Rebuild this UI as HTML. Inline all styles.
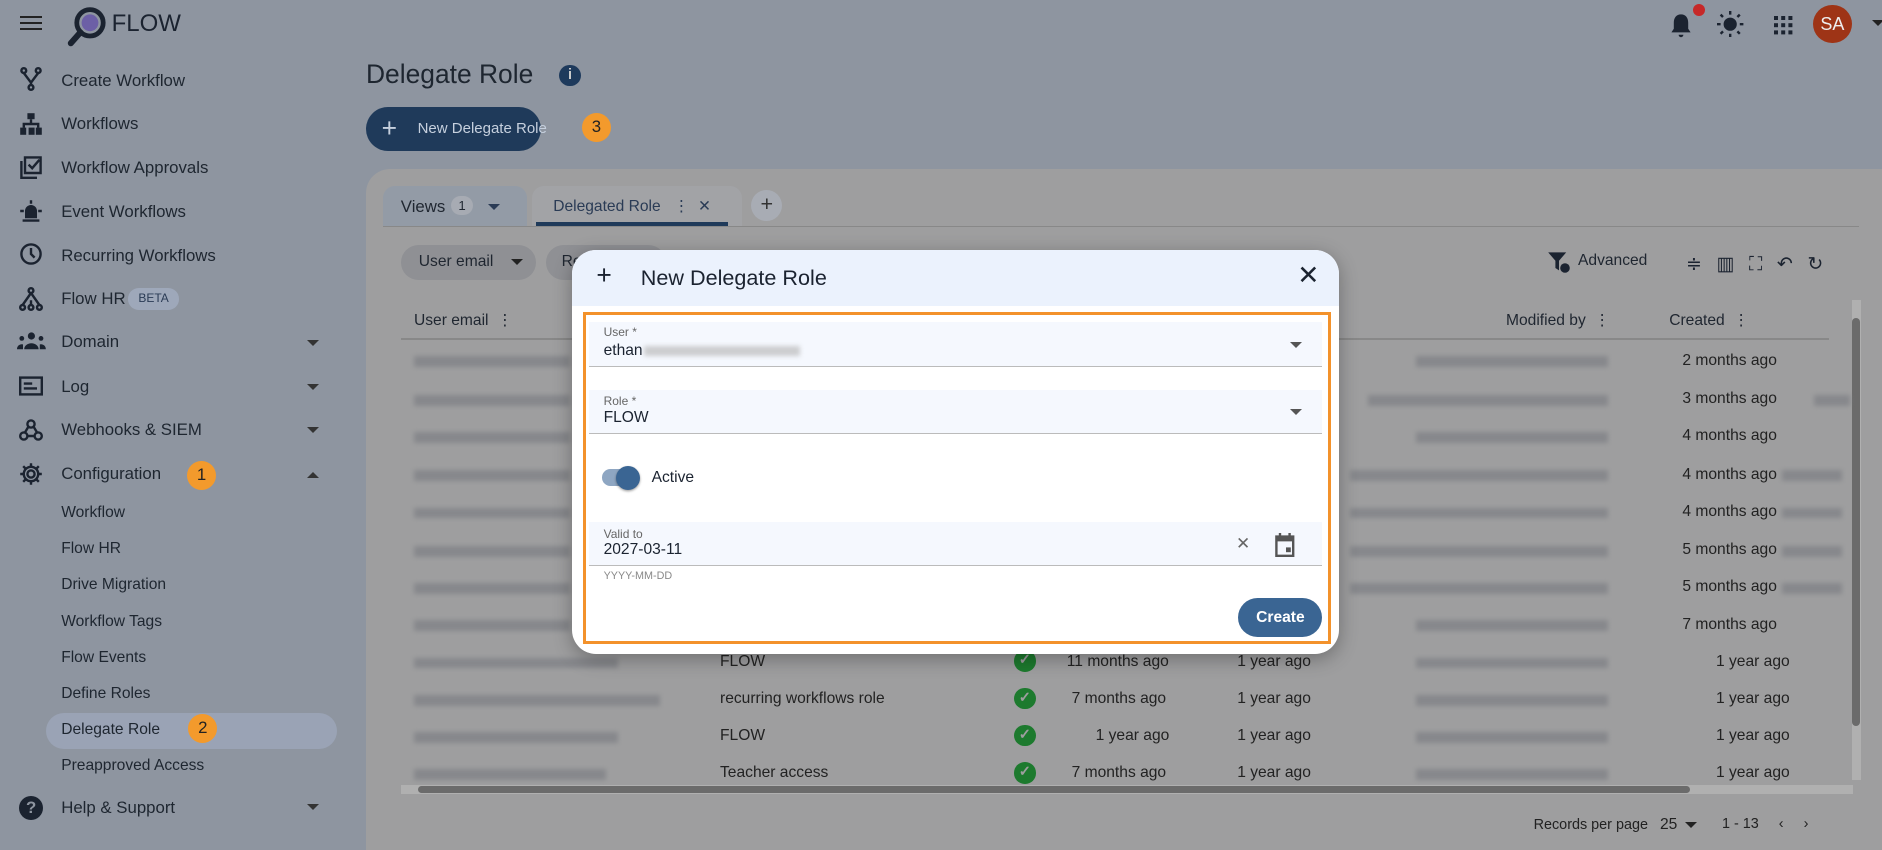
<!DOCTYPE html>
<html><head><meta charset="utf-8"><style>
*{box-sizing:border-box;margin:0;padding:0}
html,body{width:1882px;height:850px;overflow:hidden;background:#8e95a0;font-family:"Liberation Sans",sans-serif}
#w{zoom:1.2;width:1568px;height:708px;position:relative;color:#1f2630}
.a{position:absolute;white-space:nowrap}
.nav{font-size:14px;color:#1e2630}
.blur{position:absolute;height:9px;background:#7d7f84;filter:blur(2px);opacity:.7}
.cell{position:absolute;font-size:13px;color:#222;white-space:nowrap}
.badge{position:absolute;width:24px;height:24px;border-radius:50%;background:#f39a2c;color:#222;font-size:14px;text-align:center;line-height:24px}
.ck{position:absolute;width:18px;height:18px;border-radius:50%;background:#1d7a2e;color:#9e9e9f;font-size:12px;font-weight:bold;text-align:center;line-height:18px}
</style></head><body><div id="w">
<div class="a" style="left:17px;top:13px;width:18px;height:2px;background:#222;box-shadow:0 5px 0 #222,0 10px 0 #222"></div>
<svg class="a" style="left:55px;top:5px" width="34" height="34" viewBox="0 0 34 34"><circle cx="20" cy="14" r="11" fill="none" stroke="#1b2330" stroke-width="4"/><circle cx="20" cy="14" r="7" fill="#6c5fa6"/><line x1="12" y1="22" x2="4" y2="31" stroke="#1b2330" stroke-width="5" stroke-linecap="round"/></svg>
<div class="a" style="left:93px;top:8px;font-size:20px;color:#1b2330">FLOW</div>
<svg class="a" style="left:1391px;top:10px" width="20" height="22" viewBox="0 0 20 22"><path d="M10 2c-4 0-6 3-6 7v5l-2 3h16l-2-3V9c0-4-2-7-6-7zM8 19h4a2 2 0 0 1-4 0z" fill="#1b2330"/></svg>
<div class="a" style="left:1411px;top:3px;width:10px;height:10px;border-radius:50%;background:#c62828"></div>
<svg class="a" style="left:1431px;top:9px" width="22" height="22" viewBox="0 0 22 22" fill="#1b2330" stroke="#1b2330" stroke-width="2"><circle cx="11" cy="11" r="4.5"/><path d="M11 0v3M11 19v3M0 11h3M19 11h3M3 3l2 2M17 17l2 2M3 19l2-2M17 5l2-2"/></svg>
<div class="a" style="left:1478px;top:13px;width:4px;height:4px;background:#1b2330;box-shadow:6px 0 #1b2330,12px 0 #1b2330,0 6px #1b2330,6px 6px #1b2330,12px 6px #1b2330,0 12px #1b2330,6px 12px #1b2330,12px 12px #1b2330"></div>
<div class="a" style="left:1511px;top:4px;width:32px;height:32px;border-radius:50%;background:#9e3416;color:#eee;font-size:15px;text-align:center;line-height:32px">SA</div>
<div class="a" style="left:1560px;top:17px;border:5px solid transparent;border-top-color:#222"></div>
<div class="nav">
<svg class="a" style="left:16px;top:56px" width="20" height="20" viewBox="0 0 20 20" fill="none" stroke="#1b2330" stroke-width="2"><circle cx="4" cy="3" r="2"/><circle cx="16" cy="3" r="2"/><circle cx="10" cy="17" r="2"/><path d="M4 5l6 8 6-8M10 13v2"/></svg>
<div class="a" style="left:51px;top:59px">Create Workflow</div>
<svg class="a" style="left:16px;top:93px" width="20" height="20" viewBox="0 0 20 20" fill="#1b2330"><rect x="7" y="1" width="6" height="5"/><rect x="1" y="13" width="5" height="6"/><rect x="8" y="13" width="5" height="6"/><rect x="14" y="13" width="5" height="6"/><path d="M9 6h2v3h6v4h-2v-2H5v2H3V9h6z"/></svg>
<div class="a" style="left:51px;top:95px">Workflows</div>
<svg class="a" style="left:16px;top:129px" width="20" height="20" viewBox="0 0 20 20" fill="none" stroke="#1b2330" stroke-width="2"><path d="M2 5v14h13M5 2h13v13H5zM8 8l3 3 6-7"/></svg>
<div class="a" style="left:51px;top:132px">Workflow Approvals</div>
<svg class="a" style="left:16px;top:166px" width="20" height="20" viewBox="0 0 20 20" fill="#1b2330"><path d="M5 16V10a5 5 0 0 1 10 0v6zM3 17h14v2H3zM9 1h2v3H9zM1 9h3v2H1zM16 9h3v2h-3z"/></svg>
<div class="a" style="left:51px;top:168px">Event Workflows</div>
<svg class="a" style="left:16px;top:202px" width="20" height="20" viewBox="0 0 20 20" fill="none" stroke="#1b2330" stroke-width="2"><circle cx="10" cy="10" r="8"/><path d="M10 5v5l3 3"/></svg>
<div class="a" style="left:51px;top:205px">Recurring Workflows</div>
<svg class="a" style="left:16px;top:239px" width="20" height="20" viewBox="0 0 20 20" fill="none" stroke="#1b2330" stroke-width="2"><circle cx="10" cy="3" r="2"/><circle cx="3" cy="17" r="2"/><circle cx="10" cy="17" r="2"/><circle cx="17" cy="17" r="2"/><path d="M10 5L3 15M10 5l7 10M10 11v4"/></svg>
<div class="a" style="left:51px;top:241px">Flow HR</div>
<div class="a" style="left:107px;top:240px;width:42px;height:18px;border-radius:9px;background:#9ea8ba;font-size:10px;color:#2a3b55;text-align:center;line-height:18px">BETA</div>
<svg class="a" style="left:14px;top:275px" width="24" height="20" viewBox="0 0 24 20" fill="#1b2330"><circle cx="12" cy="5" r="3"/><circle cx="4" cy="7" r="2"/><circle cx="20" cy="7" r="2"/><path d="M6 16a6 5 0 0 1 12 0zM0 16a4 4 0 0 1 5-4v4zM24 16a4 4 0 0 0-5-4v4z"/></svg>
<div class="a" style="left:51px;top:277px">Domain</div>
<svg class="a" style="left:16px;top:312px" width="20" height="20" viewBox="0 0 20 20" fill="none" stroke="#1b2330" stroke-width="2"><rect x="1" y="3" width="18" height="14"/><path d="M4 8h7M4 12h11"/></svg>
<div class="a" style="left:51px;top:314px">Log</div>
<svg class="a" style="left:16px;top:348px" width="20" height="20" viewBox="0 0 20 20" fill="none" stroke="#1b2330" stroke-width="2"><circle cx="10" cy="5" r="3"/><circle cx="4" cy="15" r="3"/><circle cx="16" cy="15" r="3"/><path d="M8 7l-3 5M12 7l3 5M7 15h6"/></svg>
<div class="a" style="left:51px;top:350px">Webhooks &amp; SIEM</div>
<svg class="a" style="left:16px;top:385px" width="20" height="20" viewBox="0 0 20 20" fill="none" stroke="#1b2330" stroke-width="2"><circle cx="10" cy="10" r="3"/><path d="M10 1v3M10 16v3M1 10h3M16 10h3M3.5 3.5l2 2M14.5 14.5l2 2M3.5 16.5l2-2M14.5 5.5l2-2"/><circle cx="10" cy="10" r="6"/></svg>
<div class="a" style="left:51px;top:387px">Configuration</div>
<div class="badge" style="left:156px;top:384px">1</div>
<div class="a" style="left:256px;top:283px;border:5px solid transparent;border-top-color:#333"></div>
<div class="a" style="left:256px;top:320px;border:5px solid transparent;border-top-color:#333"></div>
<div class="a" style="left:256px;top:356px;border:5px solid transparent;border-top-color:#333"></div>
<div class="a" style="left:256px;top:388px;border:5px solid transparent;border-bottom-color:#333"></div>
<div class="a" style="left:51px;top:420px;font-size:13px">Workflow</div>
<div class="a" style="left:51px;top:450px;font-size:13px">Flow HR</div>
<div class="a" style="left:51px;top:480px;font-size:13px">Drive Migration</div>
<div class="a" style="left:51px;top:511px;font-size:13px">Workflow Tags</div>
<div class="a" style="left:51px;top:541px;font-size:13px">Flow Events</div>
<div class="a" style="left:51px;top:571px;font-size:13px">Define Roles</div>
<div class="a" style="left:38px;top:594px;width:243px;height:30px;border-radius:15px;background:#9aa3b5"></div>
<div class="a" style="left:51px;top:601px;font-size:13px">Delegate Role</div>
<div class="badge" style="left:157px;top:595px">2</div>
<div class="a" style="left:51px;top:631px;font-size:13px">Preapproved Access</div>
<div class="a" style="left:16px;top:663px;width:20px;height:20px;border-radius:50%;background:#1b2330;color:#8e95a0;font-size:14px;font-weight:bold;text-align:center;line-height:20px">?</div>
<div class="a" style="left:51px;top:665px">Help &amp; Support</div>
<div class="a" style="left:256px;top:670px;border:5px solid transparent;border-top-color:#333"></div>
</div>
<div class="a" style="left:305px;top:49px;font-size:22px;color:#1e2630">Delegate Role</div>
<div class="a" style="left:466px;top:54px;width:18px;height:18px;border-radius:50%;background:#1e3a5c;color:#ccc;font-size:12px;font-weight:bold;text-align:center;line-height:18px">i</div>
<div class="a" style="left:305px;top:89px;width:146px;height:37px;border-radius:19px;background:#1f3a5a;color:#c6d0de;font-size:12.5px;line-height:37px;padding-left:43px">New Delegate Role</div>
<div class="a" style="left:318px;top:94px;font-size:22px;color:#c6d0de">+</div>
<div class="badge" style="left:485px;top:94px">3</div>
<div class="a" style="left:305px;top:141px;width:1263px;height:580px;border-radius:20px 0 0 0;background:#9e9e9f"></div>
<div class="a" style="left:319px;top:155px;width:120px;height:33px;border-radius:10px 10px 0 0;background:#939ba6"></div>
<div class="a" style="left:334px;top:164px;font-size:14px">Views</div>
<div class="a" style="left:376px;top:163px;width:18px;height:16px;border-radius:8px;background:#a7abb3;font-size:11px;text-align:center;line-height:16px">1</div>
<div class="a" style="left:407px;top:170px;border:5px solid transparent;border-top-color:#2a3b55"></div>
<div class="a" style="left:443px;top:155px;width:175px;height:33px;border-radius:10px 10px 0 0;background:#a2a3a6"></div>
<div class="a" style="left:461px;top:164px;font-size:13px;color:#2a3b55">Delegated Role &nbsp;&nbsp;⋮ &nbsp;✕</div>
<div class="a" style="left:447px;top:185px;width:160px;height:3px;background:#1f3a5a"></div>
<div class="a" style="left:626px;top:158px;width:26px;height:26px;border-radius:50%;background:#a8acb4;text-align:center;line-height:24px;font-size:18px;color:#333">+</div>
<div class="a" style="left:319px;top:188px;width:1230px;height:1px;background:#888"></div>
<div class="a" style="left:334px;top:204px;width:113px;height:29px;border-radius:15px;background:#8f9094;font-size:13px;line-height:29px;padding-left:15px">User email</div>
<div class="a" style="left:426px;top:216px;border:5px solid transparent;border-top-color:#222"></div>
<div class="a" style="left:455px;top:204px;width:100px;height:29px;border-radius:15px;background:#8f9094;font-size:13px;line-height:29px;padding-left:13px">Re</div>
<svg class="a" style="left:1289px;top:208px" width="20" height="20" viewBox="0 0 20 20" fill="#1b2330"><path d="M1 2h15l-6 7v8l-3-2V9z"/><circle cx="15" cy="15" r="4"/></svg>
<div class="a" style="left:1315px;top:210px;font-size:13px">Advanced</div>
<div class="a" style="left:1405px;top:210px;font-size:16px;letter-spacing:12px;color:#1b2330">≑▥⛶↶↻</div>
<div class="a" style="left:345px;top:259px;font-size:13px">User email &nbsp;⋮</div>
<div class="a" style="left:1255px;top:259px;font-size:13px">Modified by &nbsp;⋮</div>
<div class="a" style="left:1391px;top:259px;font-size:13px">Created &nbsp;⋮</div>
<div class="a" style="left:334px;top:282px;width:1190px;height:1px;background:#888"></div>
<div class="a" style="left:1543px;top:250px;width:8px;height:400px;background:#b0b0b0"></div>
<div class="a" style="left:1543px;top:265px;width:7px;height:340px;border-radius:4px;background:#6b6b6b"></div>
<div class="a" style="left:334px;top:654px;width:1210px;height:8px;background:#b0b0b0"></div>
<div class="a" style="left:348px;top:655px;width:1060px;height:6px;border-radius:3px;background:#6b6b6b"></div>
<div class="cell" style="left:1402px;top:293px">2 months ago</div>
<div class="cell" style="left:1402px;top:325px">3 months ago</div>
<div class="cell" style="left:1402px;top:356px">4 months ago</div>
<div class="cell" style="left:1402px;top:388px">4 months ago</div>
<div class="cell" style="left:1402px;top:419px">4 months ago</div>
<div class="cell" style="left:1402px;top:451px">5 months ago</div>
<div class="cell" style="left:1402px;top:482px">5 months ago</div>
<div class="cell" style="left:1402px;top:513px">7 months ago</div>
<div class="cell" style="left:1430px;top:544px">1 year ago</div>
<div class="cell" style="left:1430px;top:575px">1 year ago</div>
<div class="cell" style="left:1430px;top:606px">1 year ago</div>
<div class="cell" style="left:1430px;top:637px">1 year ago</div>
<div class="blur" style="left:345px;top:297px;width:130px"></div>
<div class="blur" style="left:345px;top:329px;width:130px"></div>
<div class="blur" style="left:345px;top:360px;width:130px"></div>
<div class="blur" style="left:345px;top:392px;width:130px"></div>
<div class="blur" style="left:345px;top:423px;width:130px"></div>
<div class="blur" style="left:345px;top:455px;width:130px"></div>
<div class="blur" style="left:345px;top:486px;width:130px"></div>
<div class="blur" style="left:345px;top:517px;width:130px"></div>
<div class="blur" style="left:345px;top:548px;width:170px"></div>
<div class="blur" style="left:345px;top:579px;width:205px"></div>
<div class="blur" style="left:345px;top:610px;width:170px"></div>
<div class="blur" style="left:345px;top:641px;width:160px"></div>
<div class="blur" style="left:1180px;top:297px;width:160px"></div>
<div class="blur" style="left:1140px;top:329px;width:200px"></div>
<div class="blur" style="left:1180px;top:360px;width:160px"></div>
<div class="blur" style="left:1125px;top:392px;width:215px"></div>
<div class="blur" style="left:1125px;top:423px;width:215px"></div>
<div class="blur" style="left:1125px;top:455px;width:215px"></div>
<div class="blur" style="left:1125px;top:486px;width:215px"></div>
<div class="blur" style="left:1180px;top:517px;width:160px"></div>
<div class="blur" style="left:1180px;top:548px;width:160px"></div>
<div class="blur" style="left:1180px;top:579px;width:160px"></div>
<div class="blur" style="left:1180px;top:610px;width:160px"></div>
<div class="blur" style="left:1180px;top:641px;width:160px"></div>
<div class="blur" style="left:1485px;top:392px;width:50px"></div>
<div class="blur" style="left:1485px;top:423px;width:50px"></div>
<div class="blur" style="left:1485px;top:455px;width:50px"></div>
<div class="blur" style="left:1485px;top:486px;width:50px"></div>
<div class="blur" style="left:1512px;top:329px;width:30px"></div>
<div class="cell" style="left:600px;top:544px">FLOW</div>
<div class="cell" style="left:600px;top:575px">recurring workflows role</div>
<div class="cell" style="left:600px;top:606px">FLOW</div>
<div class="cell" style="left:600px;top:637px">Teacher access</div>
<div class="ck" style="left:845px;top:542px">✓</div><div class="ck" style="left:845px;top:573px">✓</div><div class="ck" style="left:845px;top:604px">✓</div><div class="ck" style="left:845px;top:635px">✓</div>
<div class="cell" style="left:889px;top:544px">11 months ago</div>
<div class="cell" style="left:893px;top:575px">7 months ago</div>
<div class="cell" style="left:913px;top:606px">1 year ago</div>
<div class="cell" style="left:893px;top:637px">7 months ago</div>
<div class="cell" style="left:1031px;top:544px">1 year ago</div>
<div class="cell" style="left:1031px;top:575px">1 year ago</div>
<div class="cell" style="left:1031px;top:606px">1 year ago</div>
<div class="cell" style="left:1031px;top:637px">1 year ago</div>
<div class="cell" style="left:1278px;top:680px;font-size:12px">Records per page &nbsp;&nbsp;<span style="font-size:13px">25</span></div>
<div class="a" style="left:1404px;top:685px;border:5px solid transparent;border-top-color:#222"></div>
<div class="cell" style="left:1435px;top:680px;font-size:12px">1 - 13 &nbsp;&nbsp;&nbsp;&nbsp;&lsaquo; &nbsp;&nbsp;&nbsp;&nbsp;&rsaquo;</div>
<div class="a" style="left:477px;top:208px;width:639px;height:337px;border-radius:20px;background:#fff;overflow:hidden;box-shadow:0 4px 16px rgba(0,0,0,.3)">
<div style="height:47px;background:#ebf2fd;position:relative">
<div class="a" style="left:20px;top:9px;font-size:22px;color:#1b2330">+</div>
<div class="a" style="left:57px;top:13px;font-size:18px;color:#1b2330">New Delegate Role</div>
<div class="a" style="left:604px;top:9px;font-size:22px;color:#1b2330">✕</div>
</div>
<div class="a" style="left:9px;top:52px;width:623px;height:277px;border:3px solid #f3922b"></div>
<div class="a" style="left:14px;top:60px;width:611px;height:38px;background:#f5f8fe;border-bottom:1px solid #bbb"></div>
<div class="a" style="left:26px;top:63px;font-size:10px;color:#666">User *</div>
<div class="a" style="left:26px;top:77px;font-size:13px;color:#1b2330">ethan</div>
<div class="blur" style="left:60px;top:80px;width:130px;background:#bbb"></div>
<div class="a" style="left:598px;top:77px;border:5px solid transparent;border-top-color:#555"></div>
<div class="a" style="left:14px;top:117px;width:611px;height:37px;background:#f5f8fe;border-bottom:1px solid #bbb"></div>
<div class="a" style="left:26px;top:120px;font-size:10px;color:#666">Role *</div>
<div class="a" style="left:26px;top:133px;font-size:13px;color:#1b2330">FLOW</div>
<div class="a" style="left:598px;top:133px;border:5px solid transparent;border-top-color:#555"></div>
<div class="a" style="left:25px;top:183px;width:26px;height:14px;border-radius:7px;background:#8ea6c2"></div>
<div class="a" style="left:36px;top:180px;width:20px;height:20px;border-radius:50%;background:#3a6593;box-shadow:0 1px 2px rgba(0,0,0,.4)"></div>
<div class="a" style="left:66px;top:183px;font-size:13px;color:#1b2330">Active</div>
<div class="a" style="left:14px;top:227px;width:611px;height:37px;background:#f5f8fe;border-bottom:1px solid #bbb"></div>
<div class="a" style="left:26px;top:231px;font-size:10px;color:#666">Valid to</div>
<div class="a" style="left:26px;top:243px;font-size:13px;color:#1b2330">2027-03-11</div>
<div class="a" style="left:553px;top:236px;font-size:14px;color:#666">✕</div>
<svg class="a" style="left:585px;top:236px" width="18" height="20" viewBox="0 0 18 20" fill="#555"><path d="M4 0h2v2h6V0h2v2h3v18H1V2h3zM3 7v11h12V7z"/><rect x="10" y="12" width="4" height="4"/></svg>
<div class="a" style="left:26px;top:267px;font-size:9px;color:#888">YYYY-MM-DD</div>
<div class="a" style="left:555px;top:290px;width:70px;height:33px;border-radius:17px;background:#3a6593;color:#fff;font-size:13px;font-weight:bold;text-align:center;line-height:33px">Create</div>
</div>
</div></body></html>
